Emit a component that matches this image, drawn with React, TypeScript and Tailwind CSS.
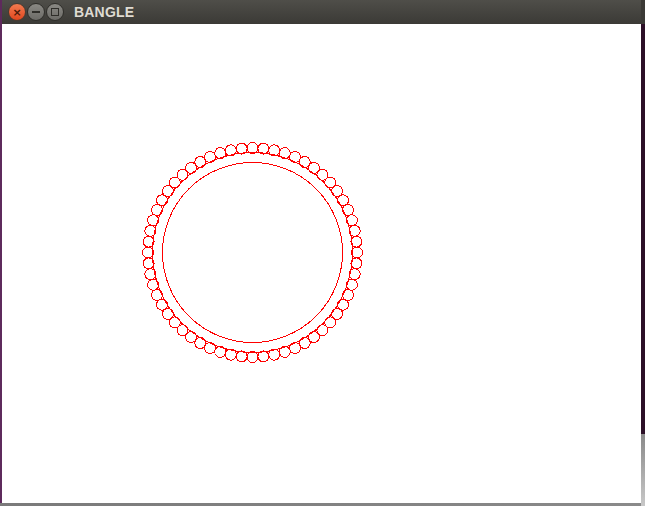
import React from 'react'

const CX = 250.5
const CY = 228.5
const BEADS = Array.from({ length: 60 }, (_, i) => {
  const a = (i * 6 * Math.PI) / 180
  return { x: CX + 104.5 * Math.cos(a), y: CY - 104.5 * Math.sin(a) }
})

function TitleButton({ kind }: { kind: 'close' | 'min' | 'max' }) {
  if (kind === 'close') {
    return (
      <div className="w-[18px] h-[18px] rounded-full bg-gradient-to-b from-[#f27a4f] to-[#e0461c] border border-[#4a3a30] flex items-center justify-center">
        <span className="text-[11px] leading-none font-bold text-[#4a1a0a] font-['DejaVu_Sans',sans-serif]">×</span>
      </div>
    )
  }
  return (
    <div className="w-[18px] h-[18px] rounded-full bg-gradient-to-b from-[#8a8984] to-[#6c6b67] border border-[#2f2e2a] flex items-center justify-center">
      {kind === 'min' ? (
        <div className="w-[8px] h-[1.5px] bg-[#2f2e2a]" />
      ) : (
        <div className="w-[8px] h-[8px] border border-[#2f2e2a]" />
      )}
    </div>
  )
}

function Bangle() {
  return (
    <svg width="639" height="479" viewBox="0 0 639 479" shapeRendering="crispEdges">
      <circle cx={CX} cy={CY} r={90} fill="none" stroke="#ff0000" strokeWidth={1} />
      <circle cx={CX} cy={CY} r={100} fill="none" stroke="#ff0000" strokeWidth={1} />
      {BEADS.map((b, i) => (
        <circle key={i} cx={b.x} cy={b.y} r={5.5} fill="none" stroke="#ff0000" strokeWidth={1} />
      ))}
    </svg>
  )
}

export default function App() {
  return (
    <div className="w-[645px] h-[506px] flex overflow-hidden bg-white">
      <div className="w-[2px] flex flex-col">
        <div className="flex-1 bg-[#5e2a5c]" />
        <div className="h-[3px] bg-[#7a7a7a]" />
      </div>
      <div className="flex-1 flex flex-col">
        <div className="h-[24px] bg-gradient-to-b from-[#4f4e49] to-[#3b3a36] flex items-center pl-[6px]">
          <div className="flex items-center gap-[1px]">
            <TitleButton kind="close" />
            <TitleButton kind="min" />
            <TitleButton kind="max" />
          </div>
          <span className="ml-[10px] text-[14px] font-bold text-[#dfdbd2] font-['Liberation_Sans',sans-serif] tracking-[0.2px]">
            BANGLE
          </span>
        </div>
        <div className="flex-1 bg-white">
          <Bangle />
        </div>
        <div className="h-[3px] bg-gradient-to-r from-[#7a7a7a] to-[#8a8a8a]" />
      </div>
      <div className="w-[4px] flex flex-col">
        <div className="h-[24px] bg-[#3b3a36]" />
        <div className="h-[410px] bg-[#2c0f27]" />
        <div className="flex-1 bg-gradient-to-b from-[#8a8a8a] to-[#c8c8c8]" />
      </div>
    </div>
  )
}
